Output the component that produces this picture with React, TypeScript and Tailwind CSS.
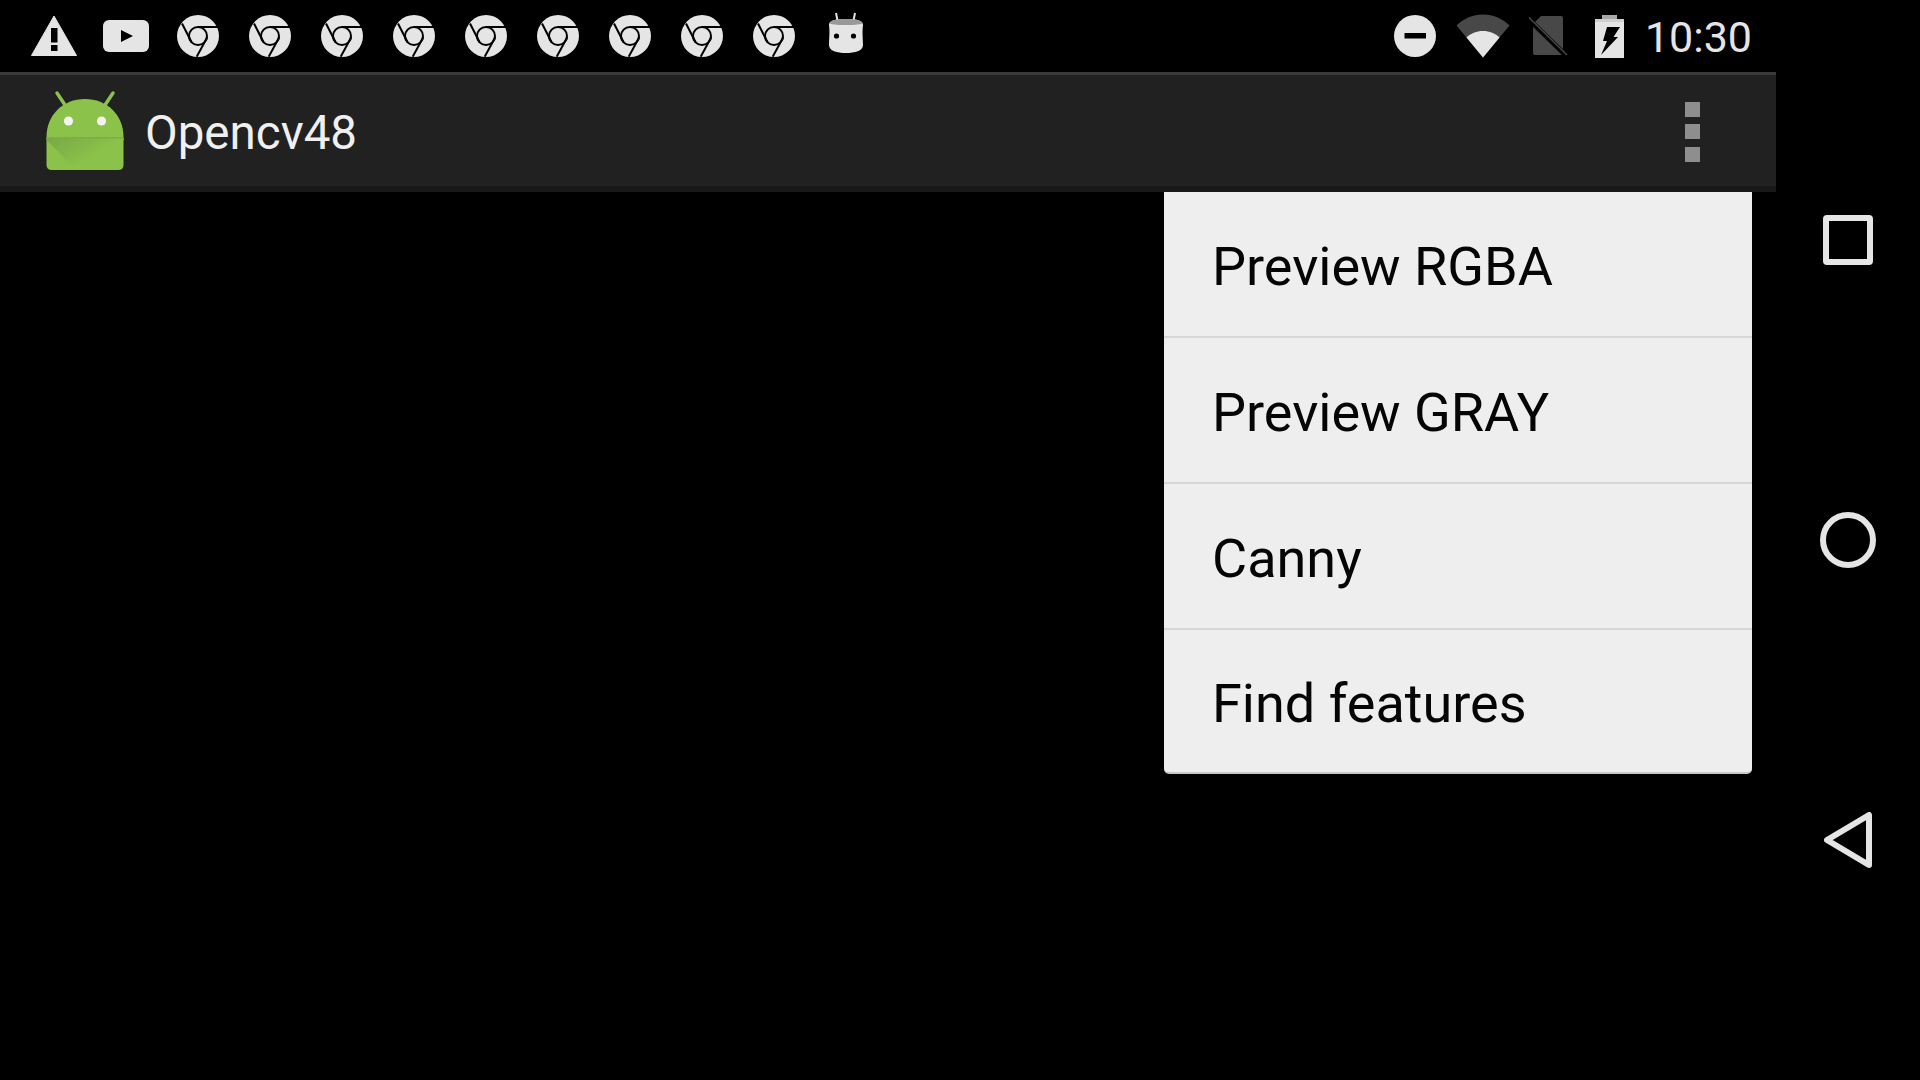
const Chrome = () => (
  <svg width="42" height="42" viewBox="0 0 42 42">
    <circle cx="21" cy="21" r="21" fill="#e5e5e5" />
    <g fill="none" stroke="#000" strokeWidth="2">
      <circle cx="21" cy="21" r="9" />
      <path d="M21 12H41.5" />
      <path d="M5 8.5L14.7 27.5" />
      <path d="M30.3 22.3L19.7 41.7" />
    </g>
  </svg>
);

const Cell = ({ children }: { children: React.ReactNode }) => (
  <div className="flex h-[72px] w-[72px] items-center justify-center">{children}</div>
);

const Robot = () => (
  <svg width="80" height="82" viewBox="45 90 80 82" className="shrink-0">
    <defs>
      <linearGradient id="fold" x1="0" y1="0" x2="1" y2="0.7">
        <stop offset="0" stopColor="#78a845" />
        <stop offset="0.7" stopColor="#8bc34a" />
      </linearGradient>
    </defs>
    <path d="M57 93L65 105M113 93L105 105" stroke="#8bc34a" strokeWidth="3.4" strokeLinecap="round" />
    <path d="M46.500 137C46.500 115 63 99 85 99C107 99 123.500 115 123.500 137V165Q123.500 170 118 170H52Q46.500 170 46.500 165Z" fill="#8bc34a" />
    <path d="M46.500 138H123.500L123.500 140L110 170H76L46.500 140Z" fill="url(#fold)" />
    <rect x="46.500" y="137" width="77" height="1.500" fill="#7cae46" />
    <circle cx="68.500" cy="121" r="4.600" fill="#f3f3f3" />
    <circle cx="101.500" cy="121" r="4.600" fill="#f3f3f3" />
  </svg>
);

const items = ["Preview RGBA", "Preview GRAY", "Canny", "Find features"];

export default function App() {
  return (
    <div className="flex h-[1080px] w-[1920px] overflow-hidden bg-black font-['Roboto',sans-serif]">
      <div className="flex w-[1776px] flex-col">
        <div className="flex h-[72px] items-center pr-[24px] pl-[18px]">
          <Cell>
            <svg width="46" height="42" viewBox="0 0 46 42">
              <path d="M23 1L45.500 40.500H0.500Z" fill="#e5e5e5" stroke="#e5e5e5" strokeLinejoin="round" />
              <rect x="20" y="13" width="6.500" height="14.500" fill="#000" />
              <rect x="20" y="30" width="6.500" height="6" fill="#000" />
            </svg>
          </Cell>
          <Cell>
            <svg width="46" height="32" viewBox="0 0 46 32">
              <rect width="46" height="32" rx="6" fill="#e5e5e5" />
              <path d="M18 10L30 16L18 22Z" fill="#000" />
            </svg>
          </Cell>
          {Array.from({ length: 9 }).map((_, i) => (
            <Cell key={i}>
              <Chrome />
            </Cell>
          ))}
          <Cell>
            <svg width="36" height="42" viewBox="0 0 36 42" className="mb-[6px]">
              <path d="M8 1L10 11M27 1L25 11" stroke="#e5e5e5" strokeWidth="2" />
              <path d="M1 13C1 8 8 7 18 7C28 7 35 8 35 13C34 20 35 28 35 33C35 39 27 41 18 41C9 41 1 39 1 33C1 28 2 20 1 13Z" fill="#e5e5e5" />
              <path d="M1.500 11C3 8 9 7 18 7C27 7 33 8 34.500 11C34 12.500 27 13 18 13C9 13 2 12.500 1.500 11Z" fill="#999" />
              <circle cx="8.500" cy="24" r="2.600" fill="#000" />
              <circle cx="25.500" cy="24" r="2.600" fill="#000" />
            </svg>
          </Cell>
          <div className="ml-auto flex items-center">
            <svg width="42" height="42" viewBox="0 0 42 42" className="mr-[20px]">
              <circle cx="21" cy="21" r="21" fill="#e5e5e5" />
              <rect x="10.500" y="18" width="21.500" height="5.500" fill="#000" />
            </svg>
            <svg width="54" height="44" viewBox="0 0 54 44" className="mr-[18px]">
              <path d="M27 43.500L0.500 11.500C7 5 16.500 0.500 27 0.500C37.500 0.500 47 5 53.500 11.500Z" fill="#484848" />
              <path d="M27 43.500L10.500 23.500C14.500 19.500 20.500 17 27 17C33.500 17 39.500 19.500 43.500 23.500Z" fill="#e5e5e5" />
            </svg>
            <svg width="40" height="42" viewBox="0 0 40 42" className="mr-[27px]">
              <path d="M13 1H33Q35 1 35 3V39Q35 40 33 40H7Q5 40 5 38V9Z" fill="#484848" />
              <path d="M0 3.500L38 40.500" stroke="#000" strokeWidth="5" />
              <path d="M1 2.500L39 40" stroke="#484848" strokeWidth="1.500" />
            </svg>
            <svg width="29" height="43" viewBox="0 0 29 43" className="mr-[21px]">
              <rect x="7" y="0" width="15" height="5" fill="#a8a8a8" />
              <rect x="0" y="4" width="29" height="3" fill="#cfcfcf" />
              <rect x="0" y="7" width="29" height="36" fill="#e5e5e5" />
              <path d="M12 12H25L18.500 22H23L6 40L12 26H8Z" fill="#000" />
            </svg>
            <span className="pt-[2px] text-[43px] leading-none text-[#e5e5e5]">10:30</span>
          </div>
        </div>
        <div className="flex h-[120px] items-center border-t-[3px] border-b-[6px] border-t-[#3a3a3a] border-b-[#181818] bg-[#212121]">
          <div className="ml-[45px] mt-[1px]">
            <Robot />
          </div>
          <span className="ml-[20px] pt-[7px] text-[47.500px] leading-none text-[#f0f0f0]">Opencv48</span>
          <div className="ml-auto mr-[76px] mt-[2px] flex flex-col gap-[7.500px]">
            <div className="h-[15px] w-[15px] bg-[#8e8e8e]" />
            <div className="h-[15px] w-[15px] bg-[#8e8e8e]" />
            <div className="h-[15px] w-[15px] bg-[#8e8e8e]" />
          </div>
        </div>
        <div className="relative flex-1">
          <div className="absolute top-0 right-[24px] w-[588px] overflow-hidden rounded-b-[5px] border-b-2 border-b-[#c8c8c8] bg-[#eeeeee]">
            {items.map((t, i) => (
              <div
                key={t}
                className={
                  i < 3
                    ? "flex h-[146px] items-center border-b-2 border-b-[#d6d6d6] pl-[48px]"
                    : "flex h-[142px] items-center pl-[48px]"
                }
              >
                <span className="pt-[5px] text-[54px] leading-none text-[#050505]">{t}</span>
              </div>
            ))}
          </div>
        </div>
      </div>
      <div className="flex w-[144px] flex-col pt-[90px]">
        <div className="flex h-[300px] items-center justify-center">
          <div className="h-[50px] w-[50px] rounded-[4px] border-[6px] border-[#e5e5e5]" />
        </div>
        <div className="flex h-[300px] items-center justify-center">
          <div className="h-[56px] w-[56px] rounded-full border-[6px] border-[#e5e5e5]" />
        </div>
        <div className="flex h-[300px] items-center justify-center">
          <svg width="48" height="56" viewBox="0 0 48 56">
            <path d="M3 28L45 3V53Z" fill="none" stroke="#e5e5e5" strokeWidth="6" strokeLinejoin="round" />
          </svg>
        </div>
      </div>
    </div>
  );
}
